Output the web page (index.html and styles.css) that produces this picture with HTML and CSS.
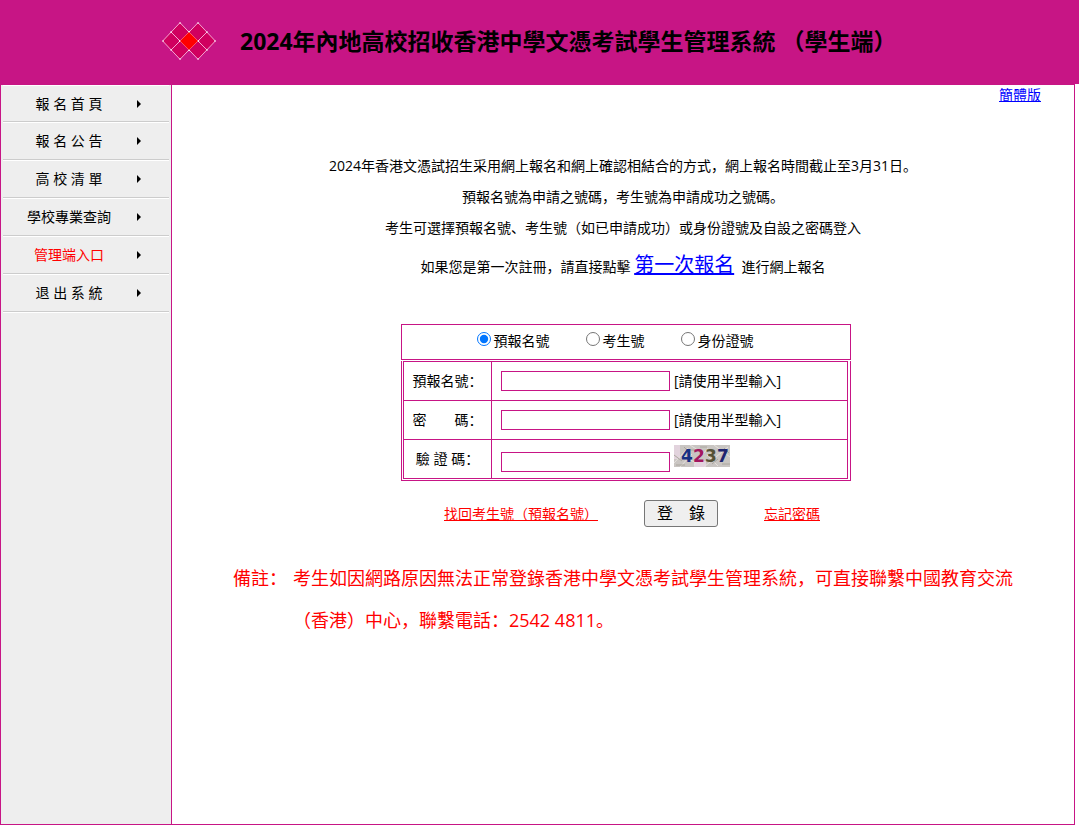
FILE: index.html
```html
<!DOCTYPE html>
<html lang="zh-Hans">
<head>
<meta charset="utf-8">
<title>2024年內地高校招收香港中學文憑考試學生管理系統 （學生端）</title>
<link rel="stylesheet" href="styles.css">
</head>
<body>
<header class="header">
  <svg class="logo" width="54" height="38" viewBox="0 0 54 38">
    <g fill="#d0005f" stroke="#f3a6d0" stroke-width="1">
      <path d="M18 .7 35.5 19 18 37.3.7 19Z"/>
      <path d="M36 .7 53.3 19 36 37.3 18.5 19Z"/>
      <path d="M9 10 27 28M45 10 27 28M9 28 27 10M45 28 27 10" fill="none"/>
    </g>
    <path d="M27 10 36 19 27 28 18 19Z" fill="#f00"/>
    <path d="M27 9.5h.1M27 28.5h.1M17.5 19h.1M36.5 19h.1M9 10h.1M9 28h.1M45 10h.1M45 28h.1M18 1h.1M36 1h.1M18 37h.1M36 37h.1M1 19h.1M53 19h.1" stroke="#fff" stroke-width="1.4" stroke-linecap="round"/>
  </svg>
  <h1 class="title">2024年內地高校招收香港中學文憑考試學生管理系統 （學生端）</h1>
</header>
<div class="frame">
  <nav class="sidebar">
    <a class="item" href="#"><span class="item-text">報 名 首 頁</span><i class="arrow"></i></a>
    <a class="item" href="#"><span class="item-text">報 名 公 告</span><i class="arrow"></i></a>
    <a class="item" href="#"><span class="item-text">高 校 清 單</span><i class="arrow"></i></a>
    <a class="item" href="#"><span class="item-text">學校專業查詢</span><i class="arrow"></i></a>
    <a class="item item-red" href="#"><span class="item-text">管理端入口</span><i class="arrow"></i></a>
    <a class="item" href="#"><span class="item-text">退 出 系 統</span><i class="arrow"></i></a>
  </nav>
  <main class="main">
    <div class="lang"><a href="#">簡體版</a></div>
    <div class="intro">
      <p>2024年香港文憑試招生采用網上報名和網上確認相結合的方式，網上報名時間截止至3月31日。</p>
      <p>預報名號為申請之號碼，考生號為申請成功之號碼。</p>
      <p>考生可選擇預報名號、考生號（如已申請成功）或身份證號及自設之密碼登入</p>
      <p class="first-time">如果您是第一次註冊，請直接點擊 <a class="big-link" href="#">第一次報名</a>&nbsp; 進行網上報名</p>
    </div>
    <form class="login">
      <div class="modes">
        <label class="mode"><input type="radio" name="mode" checked>預報名號</label>
        <label class="mode"><input type="radio" name="mode">考生號</label>
        <label class="mode"><input type="radio" name="mode">身份證號</label>
      </div>
      <div class="fields-box">
        <table class="fields">
          <tr>
            <th><label for="number">預報名號：</label></th>
            <td><div class="field"><input class="box" id="number" type="text"><span>[請使用半型輸入]</span></div></td>
          </tr>
          <tr>
            <th><label for="password">密　　碼：</label></th>
            <td><div class="field"><input class="box" id="password" type="password"><span>[請使用半型輸入]</span></div></td>
          </tr>
          <tr>
            <th><label for="code">驗 證 碼：</label></th>
            <td><div class="field field-code"><input class="box" id="code" type="text">
              <svg class="captcha" width="56" height="22" viewBox="0 0 56 22">
                <rect width="56" height="22" fill="#c9c5c2"/>
                <path d="M0 0h6v14H0zM20 16h12v6H20z" fill="#e2d3dd"/>
                <path d="M0 18 14 3M6 22 18 9M16 0 30 9M30 22 54 2M40 0 56 12M22 18 8 10M34 3 20 20M44 21 33 10" stroke="#e4e0dc" stroke-width="1"/>
                <path d="M2 20h9M14 5h6M48 19h8M26 2h7M0 10l8 6M38 19l6-5M50 3l5 5M10 2l4 4" stroke="#aaa69e" stroke-width="1"/>
                <g class="digits"><text x="7" y="17" fill="#172f83">4</text><text x="19" y="17" fill="#a3165f">2</text><text x="31" y="17" fill="#565236">3</text><text x="43" y="17" fill="#20246f">7</text></g>
              </svg></div></td>
          </tr>
        </table>
      </div>
      <div class="actions">
        <a href="#">找回考生號（預報名號）</a>
        <button class="submit" type="button">登　錄</button>
        <a href="#">忘記密碼</a>
      </div>
    </form>
    <div class="note">
      <span class="note-label">備註：</span>
      <p class="note-text">考生如因網路原因無法正常登錄香港中學文憑考試學生管理系統，可直接聯繫中國教育交流（香港）中心，聯繫電話：2542 4811。</p>
    </div>
  </main>
</div>
</body>
</html>
```

FILE: styles.css
```css
* {
  box-sizing: border-box;
}

body {
  margin: 0;
  background: #fff;
  color: #000;
  font: 14px/20px "Open Sans", "Noto Sans CJK SC", sans-serif;
}

p {
  margin: 0;
}

a {
  color: #00f;
}

.header {
  display: flex;
  align-items: center;
  gap: 24px;
  height: 84px;
  padding: 0 0 2px 162px;
  background: #c71585;
}

.logo {
  flex: none;
}

.title {
  margin: 0;
  font-size: 23px;
  line-height: 32px;
  white-space: nowrap;
}

.frame {
  display: flex;
  min-height: calc(100vh - 86px);
  margin-right: 4px;
  border: 1px solid #c71585;
}

.sidebar {
  flex: none;
  width: 171px;
  padding: 0 2px;
  background: #eee;
  border-right: 1px solid #c71585;
}

.item {
  display: flex;
  align-items: center;
  height: 38px;
  border-top: 1px solid #fff;
  border-bottom: 1px solid #ccc;
  color: #000;
  text-decoration: none;
}

.item:first-child {
  height: 37px;
}

.item:last-child {
  box-shadow: 0 1px #fff;
}

.item-red {
  color: #f00;
}

.item-text {
  width: 132px;
  text-align: center;
}

.arrow {
  margin-left: 2px;
  border: 4px solid transparent;
  border-left-color: #000;
  border-right-width: 0;
}

.main {
  flex: 1;
}

.lang {
  padding-right: 33px;
  text-align: right;
}

.intro {
  padding-top: 45px;
  text-align: center;
  line-height: 31px;
}

.first-time {
  line-height: 44px;
}

.big-link {
  font-size: 20px;
}

.login {
  width: 450px;
  margin: 35px auto 0;
  position: relative;
  left: 3px;
}

.modes {
  display: flex;
  justify-content: center;
  align-items: center;
  gap: 36px;
  height: 36px;
  padding: 0 22px 2px 0;
  border: 1px solid #c71585;
}

.mode {
  display: flex;
  align-items: center;
  gap: 3px;
}

.mode input {
  width: 14px;
  height: 14px;
  margin: 0 0 4px;
}

.fields-box {
  margin-top: 1px;
  padding: 0 2px 1px 1px;
  border: 1px solid #c71585;
  border-top: 0;
}

.fields {
  width: 100%;
  border-collapse: collapse;
}

.fields th,
.fields td {
  height: 39px;
  padding: 0;
  border: 1px solid #c71585;
}

.fields th {
  width: 88px;
  font-weight: normal;
  white-space: nowrap;
}

.field {
  display: flex;
  align-items: center;
  gap: 4px;
  padding-left: 9px;
}

.box {
  width: 169px;
  height: 20px;
  margin: 0;
  padding: 0 2px;
  background: #fff;
  border: 1px solid #c71585;
  font: inherit;
}

.field-code .box {
  margin-top: 6px;
}

.captcha {
  margin-bottom: 6px;
}

.digits {
  font: bold 17px "DejaVu Sans", sans-serif;
}

.actions {
  display: flex;
  justify-content: center;
  align-items: center;
  gap: 46px;
  margin-top: 19px;
  padding-left: 12px;
}

.actions a {
  color: #f00;
}

.submit {
  padding: 2px 12px;
  background: #efefef;
  border: 1px solid #767676;
  border-radius: 3px;
  color: #000;
  font: inherit;
  font-size: 16px;
  line-height: 21px;
}

.note {
  display: flex;
  gap: 6px;
  padding: 30px 50px 0 61px;
  color: #f00;
  font-size: 18px;
  line-height: 42px;
}

.note-label {
  flex: none;
}
```
